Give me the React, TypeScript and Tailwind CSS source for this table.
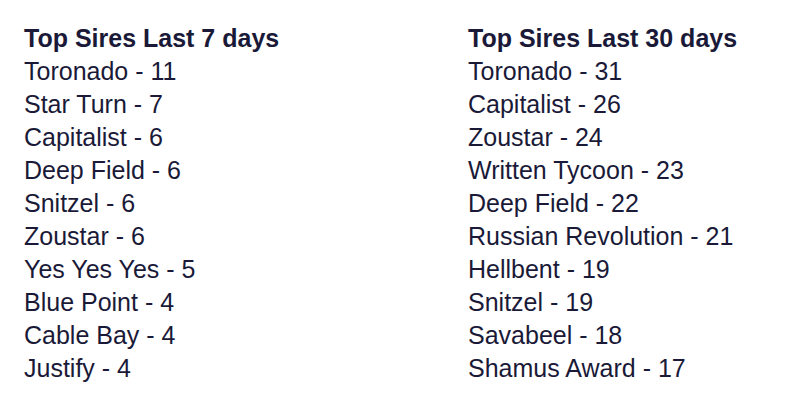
import React from "react";

const left = [
  "Toronado - 11",
  "Star Turn - 7",
  "Capitalist - 6",
  "Deep Field - 6",
  "Snitzel - 6",
  "Zoustar - 6",
  "Yes Yes Yes - 5",
  "Blue Point - 4",
  "Cable Bay - 4",
  "Justify - 4",
];
const right = [
  "Toronado - 31",
  "Capitalist - 26",
  "Zoustar - 24",
  "Written Tycoon - 23",
  "Deep Field - 22",
  "Russian Revolution - 21",
  "Hellbent - 19",
  "Snitzel - 19",
  "Savabeel - 18",
  "Shamus Award - 17",
];

function Col({ title, items }: { title: string; items: string[] }) {
  return (
    <div className="flex flex-col">
      <div className="font-bold">{title}</div>
      {items.map((t) => (
        <div key={t}>{t}</div>
      ))}
    </div>
  );
}

export default function App() {
  return (
    <div
      className="w-[800px] h-[418px] bg-white text-[#1a1a38] text-[25px] leading-[33px] flex pl-[24px] pt-[22px]"
      style={{ fontFamily: '"Liberation Sans", Arial, sans-serif' }}
    >
      <div className="w-[444px]">
        <Col title="Top Sires Last 7 days" items={left} />
      </div>
      <div>
        <Col title="Top Sires Last 30 days" items={right} />
      </div>
    </div>
  );
}
